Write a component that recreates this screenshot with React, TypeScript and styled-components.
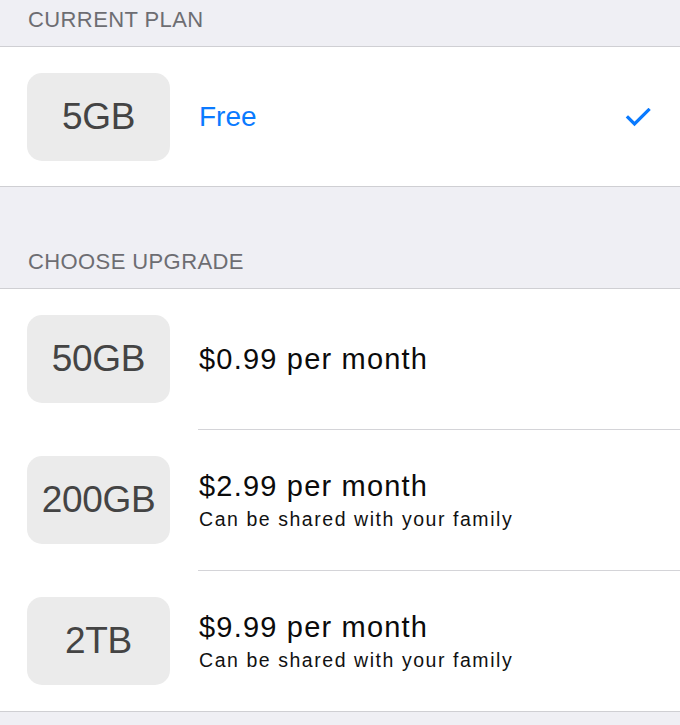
import React from "react";
import styled, { createGlobalStyle } from "styled-components";

const GlobalStyle = createGlobalStyle`
  html, body {
    margin: 0;
    padding: 0;
    background: #efeff4;
    font-family: "Liberation Sans", Arial, sans-serif;
    -webkit-font-smoothing: antialiased;
  }
`;

const Page = styled.div`
  width: 680px;
  min-height: 725px;
  background: #efeff4;
  display: flex;
  flex-direction: column;
`;

const SectionHeader = styled.div<{ $height: number }>`
  height: ${(p) => p.$height}px;
  box-sizing: border-box;
  display: flex;
  align-items: flex-end;
  padding: 0 0 13px 28px;
  font-size: 22px;
  letter-spacing: 0.4px;
  color: #6d6d72;
  text-transform: uppercase;
  line-height: 26px;
`;

const Group = styled.div`
  background: #ffffff;
  border-top: 1px solid #cfcfd3;
  border-bottom: 1px solid #cfcfd3;
  display: flex;
  flex-direction: column;
`;

const Row = styled.div<{ $height: number }>`
  height: ${(p) => p.$height}px;
  display: flex;
  align-items: center;
  padding-left: 27px;
  padding-right: 29px;
`;

const Separator = styled.div`
  height: 1px;
  margin-left: 198px;
  background: #d4d4d8;
`;

const SizePill = styled.div`
  width: 143px;
  height: 88px;
  flex: none;
  border-radius: 15px;
  background: #ebebeb;
  color: #444444;
  display: flex;
  align-items: center;
  justify-content: center;
  font-size: 37px;
  letter-spacing: -0.3px;
`;

const Info = styled.div`
  margin-left: 29px;
  flex: 1;
  display: flex;
  flex-direction: column;
  gap: 4px;
`;

const Price = styled.div<{ $blue?: boolean }>`
  font-size: ${(p) => (p.$blue ? 28 : 29)}px;
  letter-spacing: ${(p) => (p.$blue ? 0 : 1.2)}px;
  line-height: 34px;
  color: ${(p) => (p.$blue ? "#0a7aff" : "#0b0b0b")};
`;

const Note = styled.div`
  font-size: 19.5px;
  letter-spacing: 1.55px;
  line-height: 24px;
  color: #111111;
`;

const Check = styled.svg`
  width: 26px;
  height: 20px;
  flex: none;
  margin-top: 2px;
`;

const plans = [
  { size: "50GB", price: "$0.99 per month" },
  { size: "200GB", price: "$2.99 per month", note: "Can be shared with your family" },
  { size: "2TB", price: "$9.99 per month", note: "Can be shared with your family" },
];

export default function App() {
  return (
    <Page>
      <GlobalStyle />
      <SectionHeader $height={46}>Current Plan</SectionHeader>
      <Group>
        <Row $height={139}>
          <SizePill>5GB</SizePill>
          <Info>
            <Price $blue>Free</Price>
          </Info>
          <Check viewBox="0 0 26 20">
            <polyline
              points="3,9.5 9.5,16 23.5,2"
              fill="none"
              stroke="#0a7aff"
              strokeWidth="3.2"
              strokeLinecap="square"
            />
          </Check>
        </Row>
      </Group>
      <SectionHeader $height={101}>Choose Upgrade</SectionHeader>
      <Group>
        {plans.map((p, i) => (
          <React.Fragment key={p.size}>
            {i > 0 && <Separator />}
            <Row $height={140}>
              <SizePill>{p.size}</SizePill>
              <Info>
                <Price>{p.price}</Price>
                {p.note && <Note>{p.note}</Note>}
              </Info>
            </Row>
          </React.Fragment>
        ))}
      </Group>
    </Page>
  );
}
